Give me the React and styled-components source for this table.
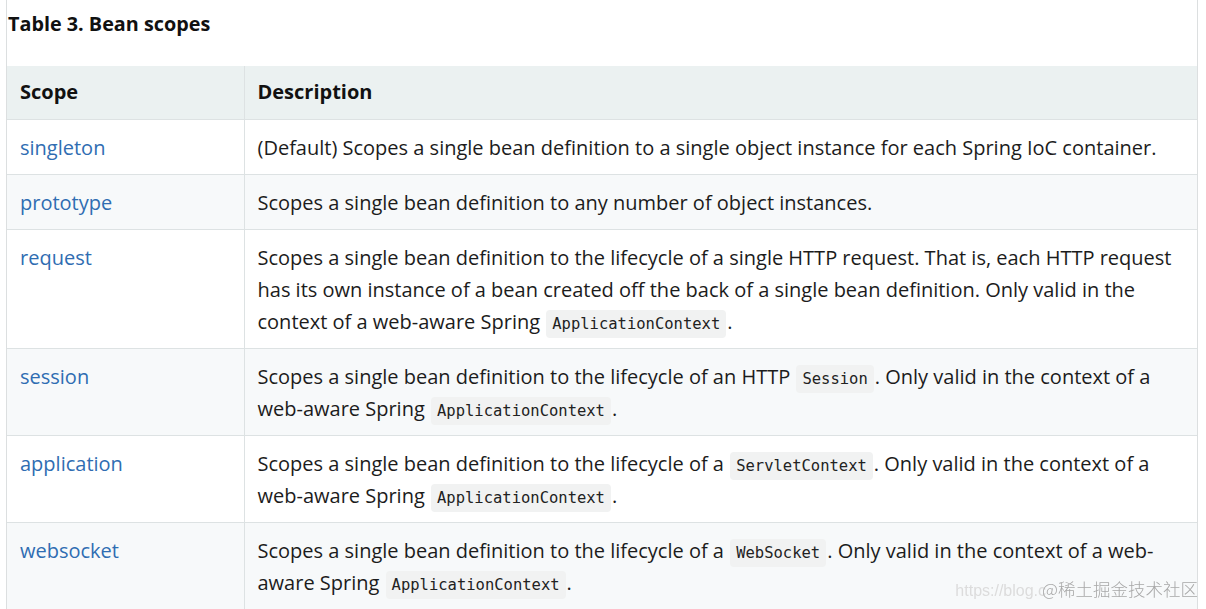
import React from 'react';
import styled, { createGlobalStyle } from 'styled-components';

const GlobalStyle = createGlobalStyle`
  body {
    margin: 0;
    background: #fff;
    font-family: "Open Sans", "Noto Sans", sans-serif;
    color: #1c1c1c;
  }
`;

const rows = [
  {
    scope: 'singleton',
    desc: ['(Default) Scopes a single bean definition to a single object instance for each Spring IoC container.'],
  },
  {
    scope: 'prototype',
    desc: ['Scopes a single bean definition to any number of object instances.'],
  },
  {
    scope: 'request',
    desc: [
      'Scopes a single bean definition to the lifecycle of a single HTTP request. That is, each HTTP request has its own instance of a bean created off the back of a single bean definition. Only valid in the context of a web-aware Spring ',
      { code: 'ApplicationContext' },
      '.',
    ],
  },
  {
    scope: 'session',
    desc: [
      'Scopes a single bean definition to the lifecycle of an HTTP ',
      { code: 'Session' },
      '. Only valid in the context of a web-aware Spring ',
      { code: 'ApplicationContext' },
      '.',
    ],
  },
  {
    scope: 'application',
    desc: [
      'Scopes a single bean definition to the lifecycle of a ',
      { code: 'ServletContext' },
      '. Only valid in the context of a web-aware Spring ',
      { code: 'ApplicationContext' },
      '.',
    ],
  },
  {
    scope: 'websocket',
    desc: [
      'Scopes a single bean definition to the lifecycle of a ',
      { code: 'WebSocket' },
      '. Only valid in the context of a web-aware Spring ',
      { code: 'ApplicationContext' },
      '.',
    ],
  },
];

export default function App() {
  return (
    <>
      <GlobalStyle />
      <Page>
        <Caption>Table 3. Bean scopes</Caption>
        <Table>
          <colgroup>
            <col style={{ width: 237 }} />
            <col />
          </colgroup>
          <thead>
            <tr>
              <HeadCell>Scope</HeadCell>
              <HeadCell>Description</HeadCell>
            </tr>
          </thead>
          <tbody>
            {rows.map((row) => (
              <Row key={row.scope}>
                <Cell>
                  <ScopeLink href="#">{row.scope}</ScopeLink>
                </Cell>
                <Cell>
                  {row.desc.map((part, i) =>
                    typeof part === 'string' ? part : <Code key={i}>{part.code}</Code>
                  )}
                </Cell>
              </Row>
            ))}
          </tbody>
        </Table>
      </Page>
      <Watermark>
        <WatermarkUrl>https://blog.c</WatermarkUrl>
        <WatermarkName>@稀土掘金技术社区</WatermarkName>
      </Watermark>
    </>
  );
}

const Page = styled.div`
  margin-left: 6px;
  width: 1190px;
  height: 609px;
  overflow: hidden;
  border-left: 1px solid #dcdfe0;
  border-right: 1px solid #dcdfe0;
`;

const Caption = styled.div`
  font-size: 19.8px;
  font-weight: 700;
  line-height: 28px;
  padding: 10px 0 0 1px;
  margin-bottom: 28px;
  color: #111;
`;

const Table = styled.table`
  width: 100%;
  border-collapse: collapse;
  table-layout: fixed;
  font-size: 20px;
  line-height: 32px;
`;

const HeadCell = styled.th`
  background: #ebf1f1;
  text-align: left;
  font-weight: 700;
  padding: 10px 13px 11px;
  border: 1px solid #dde2e3;
  border-top: none;
  border-left: none;
  color: #111;
  &:last-child {
    border-right: none;
  }
`;

const Row = styled.tr`
  &:nth-child(even) {
    background: #f7f9fa;
  }
`;

const Cell = styled.td`
  vertical-align: top;
  padding: 12px 13px 10px;
  border-bottom: 1px solid #dde2e3;
  border-right: 1px solid #dde2e3;
  &:last-child {
    border-right: none;
    padding-right: 18px;
  }
`;

const ScopeLink = styled.a`
  color: #2f6db2;
  text-decoration: none;
`;

const Code = styled.code`
  font-family: "DejaVu Sans Mono", "Liberation Mono", monospace;
  font-size: 15.5px;
  line-height: 1;
  background: #f1f2f2;
  border-radius: 4px;
  padding: 5px 6px;
  margin: 0 1px;
  color: #222;
`;

const Watermark = styled.div`
  position: fixed;
  right: 8px;
  bottom: 8px;
  display: flex;
  align-items: baseline;
  pointer-events: none;
`;

const WatermarkUrl = styled.span`
  font-family: "Liberation Sans", sans-serif;
  font-size: 16px;
  color: #dcdcdc;
  margin-right: -4px;
`;

const WatermarkName = styled.span`
  font-family: "Noto Sans CJK SC", sans-serif;
  font-size: 17.5px;
  font-weight: 300;
  color: #a8a8a8;
`;
